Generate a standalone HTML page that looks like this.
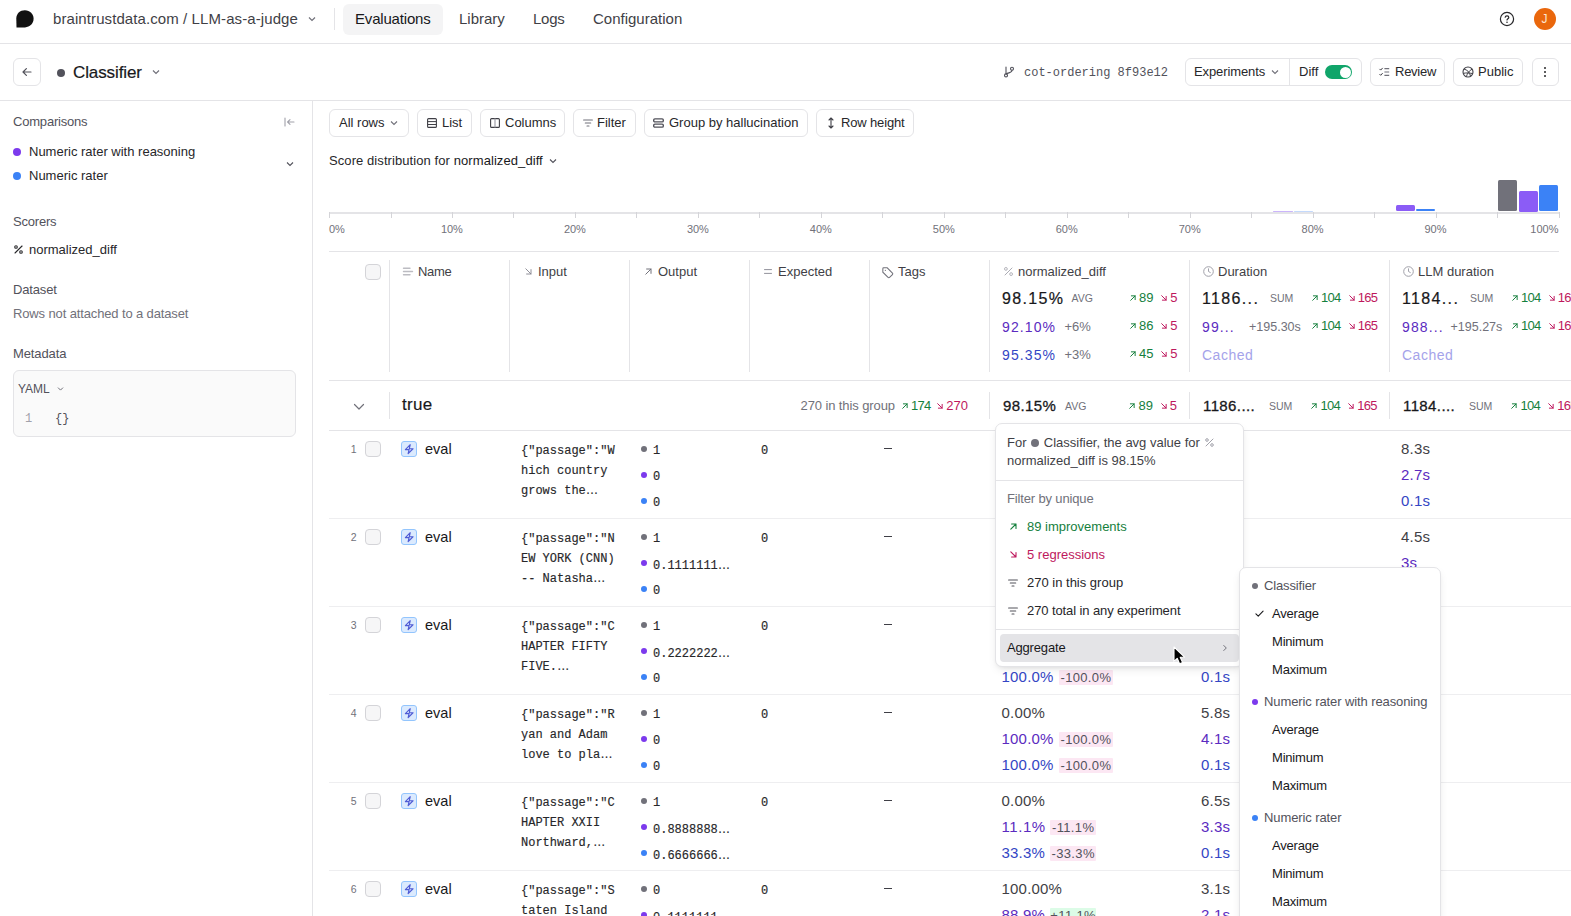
<!DOCTYPE html>
<html><head><meta charset="utf-8"><title>Classifier - Braintrust</title>
<style>
*{box-sizing:border-box;margin:0;padding:0}
html,body{width:1571px;height:916px;overflow:hidden;background:#fff}
body{font-family:"Liberation Sans",sans-serif;color:#18181b;font-size:13px;position:relative}
.a{position:absolute;white-space:nowrap;line-height:1}
.mono{font-family:"Liberation Mono",monospace}
.btn{position:absolute;border:1px solid #e4e4e7;border-radius:6px;background:#fff;height:28px;top:58px}
.hl{position:absolute;background:#e4e4e7;height:1px}
.vl{position:absolute;background:#e4e4e7;width:1px}
.g{color:#71717a}
.dot{position:absolute;border-radius:50%}
.cb{position:absolute;width:14px;height:14px;border:1px solid #d4d4d8;border-radius:4px;background:#f6f6f7}
svg{position:absolute;overflow:visible}

.cl{font-size:11px;color:#71717a}
.h{font-size:13px;color:#3f3f46}
.n{font-size:13px}
.big{font-size:16px;color:#18181b;-webkit-text-stroke:0.22px #18181b;letter-spacing:1.35px}
.agg{font-size:10.5px;color:#71717a}
.med{font-size:14px;letter-spacing:1.1px}
.dl{font-size:13px;color:#71717a}
.gb{font-size:15px;color:#18181b;-webkit-text-stroke:0.3px #18181b;letter-spacing:0.4px}
.ev{font-size:14.5px;color:#18181b}
.m12{font-size:12px;color:#27272a}
.sv{font-size:15px;letter-spacing:0.2px}
.bd{font-size:13px;color:#52525b;height:15px;line-height:15.5px;letter-spacing:0.35px;text-indent:0.3px;text-align:center;border-radius:1px}
.pop{position:absolute;background:#fff;border:1px solid #e4e4e7;border-radius:7px;box-shadow:0 4px 10px -2px rgba(0,0,0,.10),0 2px 4px -2px rgba(0,0,0,.08)}
.mi{font-size:13px;color:#18181b;letter-spacing:-0.2px}
.m12{-webkit-text-stroke:0.15px #27272a}
.el{font-family:"Liberation Sans",sans-serif;font-size:12.5px}
.n3{letter-spacing:-0.7px}
</style></head><body>
<!-- TOPNAV -->
<div id="topnav">
<svg style="left:16px;top:10px" width="18" height="18" viewBox="0 0 18 18"><path d="M0.5 17.5 L0.3 8.6 C0.3 3.6 4 0.2 8.9 0.2 C13.9 0.2 17.6 4 17.6 8.8 C17.6 13.6 13.8 17.2 9 17.4 Z" fill="#111"/></svg>
<div class="a" style="left:53px;top:11px;font-size:15px;color:#3f3f46;letter-spacing:0.09px" id="t_bc">braintrustdata.com / LLM-as-a-judge</div>
<svg style="left:307px;top:15px" width="10" height="8" viewBox="0 0 10 8"><path d="M2 2.5 L5 5.5 L8 2.5" fill="none" stroke="#71717a" stroke-width="1.2"/></svg>
<div class="vl" style="left:334px;top:8px;height:22px"></div>
<div class="a" style="left:342.5px;top:3.5px;width:100px;height:31.5px;border-radius:6px;background:#f4f4f5"></div>
<div class="a" style="left:355px;top:11px;font-size:15px;color:#18181b;letter-spacing:-0.18px" id="t_ev">Evaluations</div>
<div class="a" style="left:459px;top:11px;font-size:15px;color:#3f3f46" id="t_lib">Library</div>
<div class="a" style="left:533px;top:11px;font-size:15px;color:#3f3f46;letter-spacing:-0.25px" id="t_logs">Logs</div>
<div class="a" style="left:593px;top:11px;font-size:15px;color:#3f3f46" id="t_conf">Configuration</div>
<svg style="left:1499px;top:11px" width="16" height="16" viewBox="0 0 16 16"><circle cx="8" cy="8" r="6.6" fill="none" stroke="#27272a" stroke-width="1.2"/><path d="M6.2 6.2 C6.4 4.4 9.8 4.4 9.8 6.4 C9.8 7.6 8 7.8 8 9" fill="none" stroke="#27272a" stroke-width="1.2" stroke-linecap="round"/><circle cx="8" cy="11.2" r="0.8" fill="#27272a"/></svg>
<div class="dot" style="left:1534px;top:8px;width:22px;height:22px;background:#ea670c"></div>
<div class="a" style="left:1541.5px;top:13px;font-size:12px;color:#fde4cf" id="t_j">J</div>
<div class="hl" style="left:0;top:43px;width:1571px"></div>
</div>
<!-- SUBBAR -->
<div id="subbar">
<div class="btn" style="left:13px;width:28px;top:58px;height:28px"></div>
<svg style="left:21px;top:66px" width="12" height="12" viewBox="0 0 12 12"><path d="M10 6 H2.2 M5.4 2.6 L2 6 L5.4 9.4" fill="none" stroke="#52525b" stroke-width="1.2" stroke-linecap="round" stroke-linejoin="round"/></svg>
<div class="dot" style="left:57px;top:69px;width:8px;height:8px;background:#52525b"></div>
<div class="a" style="left:73px;top:63.5px;font-size:17px;color:#18181b;-webkit-text-stroke:0.2px #18181b;letter-spacing:-0.1px" id="t_cls">Classifier</div>
<svg style="left:151px;top:68px" width="10" height="8" viewBox="0 0 10 8"><path d="M2 2.5 L5 5.5 L8 2.5" fill="none" stroke="#71717a" stroke-width="1.2"/></svg>
<div class="hl" style="left:0;top:100px;width:1571px"></div>
</div>

<!-- SUBBAR RIGHT -->
<div id="subright">
<svg style="left:1003px;top:66px" width="12" height="12" viewBox="0 0 12 12"><circle cx="3" cy="9.4" r="1.5" fill="none" stroke="#52525b" stroke-width="1.1"/><circle cx="9" cy="2.8" r="1.5" fill="none" stroke="#52525b" stroke-width="1.1"/><path d="M3 1 V8 M9 4.3 C9 7 5 6.5 3.4 8" fill="none" stroke="#52525b" stroke-width="1.1" stroke-linecap="round"/></svg>
<div class="a mono" style="left:1024px;top:66.5px;font-size:12px;color:#52525b" id="t_cot">cot-ordering 8f93e12</div>
<div class="btn" style="left:1185px;width:177px"></div>
<div class="vl" style="left:1289px;top:59px;height:26px"></div>
<div class="a" style="left:1194px;top:65px;font-size:13px;color:#27272a;letter-spacing:-0.1px" id="t_exp">Experiments</div>
<svg style="left:1270px;top:68px" width="10" height="8" viewBox="0 0 10 8"><path d="M2 2.5 L5 5.5 L8 2.5" fill="none" stroke="#71717a" stroke-width="1.1"/></svg>
<div class="a" style="left:1299px;top:65px;font-size:13px;color:#27272a" id="t_diff">Diff</div>
<div class="a" style="left:1325px;top:65px;width:27px;height:14px;border-radius:7px;background:#10a56a"></div>
<div class="dot" style="left:1339.5px;top:66.5px;width:11px;height:11px;background:#fff"></div>
<div class="btn" style="left:1370px;width:75px"></div>
<svg style="left:1379px;top:67px" width="11" height="10" viewBox="0 0 11 10"><path d="M0.8 2.2 L1.7 3.1 L3.4 1.2 M0.8 7.4 L1.7 8.3 L3.4 6.4" fill="none" stroke="#3f3f46" stroke-width="1" stroke-linecap="round" stroke-linejoin="round"/><path d="M5.4 1.6 H10.2 M5.4 5 H10.2 M5.4 8.4 H10.2" fill="none" stroke="#71717a" stroke-width="1.2"/></svg>
<div class="a" style="left:1395px;top:65px;font-size:13px;color:#27272a;letter-spacing:-0.25px" id="t_rev">Review</div>
<div class="btn" style="left:1453px;width:70px"></div>
<svg style="left:1462px;top:66px" width="12" height="12" viewBox="0 0 12 12"><circle cx="6" cy="6" r="5" fill="none" stroke="#3f3f46" stroke-width="1.1"/><path d="M2 3 C5 4 8 6 8.5 10.3 M4.4 10.6 C5 8 7.5 4 10.2 3.2 M1.2 7.4 C4 6.6 8 7 10.8 7.6" fill="none" stroke="#3f3f46" stroke-width="1"/></svg>
<div class="a" style="left:1478px;top:65px;font-size:13px;color:#27272a" id="t_pub">Public</div>
<div class="btn" style="left:1531.5px;width:27.5px"></div>
<div class="dot" style="left:1544px;top:66.5px;width:2.4px;height:2.4px;background:#27272a"></div>
<div class="dot" style="left:1544px;top:70.8px;width:2.4px;height:2.4px;background:#27272a"></div>
<div class="dot" style="left:1544px;top:75.1px;width:2.4px;height:2.4px;background:#27272a"></div>
</div>
<!-- SIDEBAR -->
<div id="sidebar">
<div class="vl" style="left:312px;top:101px;height:815px"></div>
<div class="a" style="left:13px;top:115px;font-size:13px;color:#52525b;letter-spacing:-0.2px" id="t_comp">Comparisons</div>
<svg style="left:284px;top:117px" width="11" height="10" viewBox="0 0 11 10"><path d="M1 1 V9 M10 5 H3.6 M6 2.6 L3.6 5 L6 7.4" fill="none" stroke="#a1a1aa" stroke-width="1.1" stroke-linecap="round" stroke-linejoin="round"/></svg>
<div class="dot" style="left:13px;top:148px;width:8px;height:8px;background:#7c3aed"></div>
<div class="a" style="left:29px;top:145px;font-size:13px;color:#27272a" id="t_nrr">Numeric rater with reasoning</div>
<div class="dot" style="left:13px;top:172px;width:8px;height:8px;background:#3b82f6"></div>
<div class="a" style="left:29px;top:169px;font-size:13px;color:#27272a" id="t_nr">Numeric rater</div>
<svg style="left:285px;top:160px" width="10" height="8" viewBox="0 0 10 8"><path d="M2 2.5 L5 5.5 L8 2.5" fill="none" stroke="#52525b" stroke-width="1.1"/></svg>
<div class="a" style="left:13px;top:215px;font-size:13px;color:#52525b;letter-spacing:-0.2px" id="t_sc">Scorers</div>
<svg style="left:14px;top:245px" width="9" height="9" viewBox="0 0 9 9"><path d="M8 1 L1 8" stroke="#27272a" stroke-width="1.1" stroke-linecap="round"/><circle cx="2" cy="2" r="1.3" fill="none" stroke="#27272a" stroke-width="1.1"/><circle cx="7" cy="7" r="1.3" fill="none" stroke="#27272a" stroke-width="1.1"/></svg>
<div class="a" style="left:29px;top:243px;font-size:13px;color:#27272a" id="t_nd">normalized_diff</div>
<div class="a" style="left:13px;top:283px;font-size:13px;color:#52525b;letter-spacing:-0.15px" id="t_ds">Dataset</div>
<div class="a" style="left:13px;top:307px;font-size:13px;color:#71717a;letter-spacing:-0.13px" id="t_rows">Rows not attached to a dataset</div>
<div class="a" style="left:13px;top:347px;font-size:13px;color:#52525b;letter-spacing:-0.12px" id="t_md">Metadata</div>
<div class="a" style="left:13px;top:370px;width:283px;height:67px;border:1px solid #e4e4e7;border-radius:6px;background:#fafafa"></div>
<div class="a" style="left:18px;top:383px;font-size:12px;color:#52525b" id="t_yaml">YAML</div>
<svg style="left:56px;top:385px" width="9" height="8" viewBox="0 0 9 8"><path d="M2 2.6 L4.5 5.1 L7 2.6" fill="none" stroke="#71717a" stroke-width="1"/></svg>
<div class="a mono" style="left:25px;top:413px;font-size:12px;color:#a1a1aa">1</div>
<div class="a mono" style="left:55px;top:413px;font-size:12px;color:#52525b">{}</div>
</div>
<!-- TOOLBAR -->
<div id="toolbar">
<div class="btn" style="top:109px;left:329px;width:80px"></div>
<div class="a" style="left:339px;top:116px;font-size:13px;color:#27272a" id="t_all">All rows</div>
<svg style="left:389px;top:119px" width="10" height="8" viewBox="0 0 10 8"><path d="M2 2.5 L5 5.5 L8 2.5" fill="none" stroke="#71717a" stroke-width="1.1"/></svg>
<div class="btn" style="top:109px;left:417px;width:55px"></div>
<svg style="left:427px;top:118px" width="10" height="10" viewBox="0 0 10 10"><rect x="0.6" y="0.6" width="8.8" height="8.8" rx="1" fill="none" stroke="#3f3f46" stroke-width="1.1"/><path d="M0.6 3.6 H9.4 M0.6 6.5 H9.4" stroke="#3f3f46" stroke-width="1"/></svg>
<div class="a" style="left:442px;top:116px;font-size:13px;color:#27272a" id="t_list">List</div>
<div class="btn" style="top:109px;left:480px;width:85px"></div>
<svg style="left:490px;top:118px" width="10" height="10" viewBox="0 0 10 10"><rect x="0.6" y="0.6" width="8.8" height="8.8" rx="1" fill="none" stroke="#3f3f46" stroke-width="1.1"/><path d="M5 0.6 V9.4" stroke="#a1a1aa" stroke-width="1.2"/></svg>
<div class="a" style="left:505px;top:116px;font-size:13px;color:#27272a" id="t_cols">Columns</div>
<div class="btn" style="top:109px;left:573px;width:63px"></div>
<svg style="left:583px;top:119px" width="10" height="8" viewBox="0 0 10 8"><path d="M0.6 1 H9.4 M2.3 4 H7.7 M4 7 H6" stroke="#71717a" stroke-width="1.1" stroke-linecap="round"/></svg>
<div class="a" style="left:597px;top:116px;font-size:13px;color:#27272a" id="t_filt">Filter</div>
<div class="btn" style="top:109px;left:644px;width:164px"></div>
<svg style="left:653px;top:118px" width="11" height="10" viewBox="0 0 11 10"><rect x="0.7" y="0.9" width="9.6" height="3" rx="1.2" fill="none" stroke="#52525b" stroke-width="1.4"/><rect x="0.7" y="6.1" width="9.6" height="3" rx="1.2" fill="none" stroke="#52525b" stroke-width="1.4"/></svg>
<div class="a" style="left:669px;top:116px;font-size:13px;color:#27272a" id="t_grp">Group by hallucination</div>
<div class="btn" style="top:109px;left:816px;width:98px"></div>
<svg style="left:828px;top:117px" width="6" height="12" viewBox="0 0 6 12"><path d="M3 1 V11 M1 3 L3 1 L5 3 M1 9 L3 11 L5 9" fill="none" stroke="#3f3f46" stroke-width="1.1" stroke-linecap="round" stroke-linejoin="round"/></svg>
<div class="a" style="left:841px;top:116px;font-size:13px;color:#27272a;letter-spacing:-0.15px" id="t_rh">Row height</div>
<div class="a" style="left:329px;top:154px;font-size:13px;color:#27272a;letter-spacing:0.08px" id="t_sd">Score distribution for <span style="color:#18181b">normalized_diff</span></div>
<svg style="left:548px;top:157px" width="10" height="8" viewBox="0 0 10 8"><path d="M2 2.5 L5 5.5 L8 2.5" fill="none" stroke="#52525b" stroke-width="1.1"/></svg>
</div>

<!-- CHART -->
<div id="chart">
<div class="a" style="left:329.0px;top:211.5px;width:1230.5px;height:2px;background:#e4e4e7"></div>
<div class="a" style="left:329.0px;top:212px;width:1px;height:6px;background:#d4d4d8"></div>
<div class="a" style="left:390.5px;top:212px;width:1px;height:6px;background:#d4d4d8"></div>
<div class="a" style="left:451.9px;top:212px;width:1px;height:6px;background:#d4d4d8"></div>
<div class="a" style="left:513.4px;top:212px;width:1px;height:6px;background:#d4d4d8"></div>
<div class="a" style="left:574.9px;top:212px;width:1px;height:6px;background:#d4d4d8"></div>
<div class="a" style="left:636.4px;top:212px;width:1px;height:6px;background:#d4d4d8"></div>
<div class="a" style="left:697.9px;top:212px;width:1px;height:6px;background:#d4d4d8"></div>
<div class="a" style="left:759.3px;top:212px;width:1px;height:6px;background:#d4d4d8"></div>
<div class="a" style="left:820.8px;top:212px;width:1px;height:6px;background:#d4d4d8"></div>
<div class="a" style="left:882.3px;top:212px;width:1px;height:6px;background:#d4d4d8"></div>
<div class="a" style="left:943.8px;top:212px;width:1px;height:6px;background:#d4d4d8"></div>
<div class="a" style="left:1005.2px;top:212px;width:1px;height:6px;background:#d4d4d8"></div>
<div class="a" style="left:1066.7px;top:212px;width:1px;height:6px;background:#d4d4d8"></div>
<div class="a" style="left:1128.2px;top:212px;width:1px;height:6px;background:#d4d4d8"></div>
<div class="a" style="left:1189.7px;top:212px;width:1px;height:6px;background:#d4d4d8"></div>
<div class="a" style="left:1251.1px;top:212px;width:1px;height:6px;background:#d4d4d8"></div>
<div class="a" style="left:1312.6px;top:212px;width:1px;height:6px;background:#d4d4d8"></div>
<div class="a" style="left:1374.1px;top:212px;width:1px;height:6px;background:#d4d4d8"></div>
<div class="a" style="left:1435.5px;top:212px;width:1px;height:6px;background:#d4d4d8"></div>
<div class="a" style="left:1497.0px;top:212px;width:1px;height:6px;background:#d4d4d8"></div>
<div class="a" style="left:1558.5px;top:212px;width:1px;height:6px;background:#d4d4d8"></div>
<div class="a cl" style="left:329.0px;top:224px">0%</div>
<div class="a cl" style="left:431.9px;top:224px;width:40px;text-align:center">10%</div>
<div class="a cl" style="left:554.9px;top:224px;width:40px;text-align:center">20%</div>
<div class="a cl" style="left:677.9px;top:224px;width:40px;text-align:center">30%</div>
<div class="a cl" style="left:800.8px;top:224px;width:40px;text-align:center">40%</div>
<div class="a cl" style="left:923.8px;top:224px;width:40px;text-align:center">50%</div>
<div class="a cl" style="left:1046.7px;top:224px;width:40px;text-align:center">60%</div>
<div class="a cl" style="left:1169.7px;top:224px;width:40px;text-align:center">70%</div>
<div class="a cl" style="left:1292.6px;top:224px;width:40px;text-align:center">80%</div>
<div class="a cl" style="left:1415.5px;top:224px;width:40px;text-align:center">90%</div>
<div class="a cl" style="left:1518.5px;top:224px;width:40px;text-align:right">100%</div>
<div class="a" style="left:1498.3px;top:180.3px;width:19px;height:31.19999999999999px;background:#71717a;border-radius:1.5px;opacity:1"></div>
<div class="a" style="left:1518.9px;top:190.5px;width:19px;height:21.0px;background:#8b5cf6;border-radius:1.5px;opacity:1"></div>
<div class="a" style="left:1539.2px;top:185.3px;width:19.3px;height:26.19999999999999px;background:#3b82f6;border-radius:1.5px;opacity:1"></div>
<div class="a" style="left:1395.5px;top:205.2px;width:19.4px;height:6.300000000000011px;background:#8b5cf6;border-radius:1.5px;opacity:1"></div>
<div class="a" style="left:1416.2px;top:208.9px;width:19px;height:2.5999999999999943px;background:#3b82f6;border-radius:1.5px;opacity:1"></div>
<div class="a" style="left:1273px;top:210.7px;width:20px;height:0.8000000000000114px;background:#8b5cf6;border-radius:1.5px;opacity:0.45"></div>
<div class="a" style="left:1293.5px;top:211px;width:19px;height:0.5px;background:#3b82f6;border-radius:1.5px;opacity:0.3"></div>
</div>
<!-- TABLE HEADER -->
<div id="thead">
<div class="hl" style="left:329px;top:251px;width:1230px"></div>
<div class="hl" style="left:329px;top:380px;width:1242px"></div>
<div class="hl" style="left:329px;top:430px;width:1242px"></div>
<div class="vl" style="left:389px;top:260px;height:112px"></div>
<div class="vl" style="left:509px;top:260px;height:112px"></div>
<div class="vl" style="left:629px;top:260px;height:112px"></div>
<div class="vl" style="left:749px;top:260px;height:112px"></div>
<div class="vl" style="left:869px;top:260px;height:112px"></div>
<div class="vl" style="left:989px;top:260px;height:112px"></div>
<div class="vl" style="left:1189px;top:260px;height:112px"></div>
<div class="vl" style="left:1389px;top:260px;height:112px"></div>
<div class="vl" style="left:389px;top:392px;height:27px"></div>
<div class="vl" style="left:989px;top:392px;height:27px"></div>
<div class="vl" style="left:1189px;top:392px;height:27px"></div>
<div class="vl" style="left:1389px;top:392px;height:27px"></div>
<div class="cb" style="left:365px;top:264px;width:16px;height:16px"></div>
<svg style="left:403px;top:267px" width="10" height="9" viewBox="0 0 10 9"><path d="M0.5 1.2 H7 M0.5 4.5 H9.5 M0.5 7.8 H7" stroke="#bcbcc2" stroke-width="1.4" stroke-linecap="round"/></svg>
<svg style="left:525px;top:268px" width="7" height="7" viewBox="0 0 7 7"><path d="M0.8 0.8 L6 6 M6 1.6 V6 H1.6" fill="none" stroke="#85858e" stroke-width="0.9" stroke-linecap="round" stroke-linejoin="round"/></svg>
<svg style="left:645px;top:268px" width="7" height="7" viewBox="0 0 7 7"><path d="M0.8 6.2 L6 1 M1.6 1 H6 V5.4" fill="none" stroke="#71717a" stroke-width="1" stroke-linecap="round" stroke-linejoin="round"/></svg>
<svg style="left:764px;top:268px" width="8" height="7" viewBox="0 0 8 7"><path d="M0.5 1.6 H7.5 M0.5 5.4 H7.5" stroke="#85858e" stroke-width="0.9" stroke-linecap="round"/></svg>
<svg style="left:882px;top:266.7px" width="11.5" height="11.5" viewBox="0 0 11 11"><path d="M0.8 1.6 V5 L5.8 10 C6.2 10.4 6.8 10.4 7.2 10 L10 7.2 C10.4 6.8 10.4 6.2 10 5.8 L5 0.8 H1.6 C1.1 0.8 0.8 1.1 0.8 1.6Z" fill="none" stroke="#71717a" stroke-width="1"/><circle cx="3.2" cy="3.2" r="0.6" fill="#71717a"/></svg>
<div class="a h" style="left:418px;top:265px;letter-spacing:-0.3px" id="h_name">Name</div>
<div class="a h" style="left:538px;top:265px" id="h_in">Input</div>
<div class="a h" style="left:658px;top:265px" id="h_out">Output</div>
<div class="a h" style="left:778px;top:265px" id="h_exp">Expected</div>
<div class="a h" style="left:898px;top:265px" id="h_tags">Tags</div>
<svg style="left:1003.5px;top:267px" width="9" height="9" viewBox="0 0 9 9"><path d="M8 1 L1 8" stroke="#a1a1aa" stroke-width="0.9" stroke-linecap="round"/><circle cx="1.9" cy="1.9" r="1.4" fill="none" stroke="#a1a1aa" stroke-width="0.8"/><circle cx="7.1" cy="7.1" r="1.4" fill="none" stroke="#a1a1aa" stroke-width="0.8"/></svg>
<div class="a h" style="left:1018px;top:265px" id="h_nd">normalized_diff</div>
<svg style="left:1202.5px;top:266px" width="11" height="11" viewBox="0 0 11 11"><circle cx="5.5" cy="5.5" r="4.8" fill="none" stroke="#a1a1aa" stroke-width="1"/><path d="M5.5 2.8 V5.5 L7.3 6.5" fill="none" stroke="#a1a1aa" stroke-width="1" stroke-linecap="round"/></svg>
<div class="a h" style="left:1218px;top:265px" id="h_dur">Duration</div>
<svg style="left:1402.5px;top:266px" width="11" height="11" viewBox="0 0 11 11"><circle cx="5.5" cy="5.5" r="4.8" fill="none" stroke="#a1a1aa" stroke-width="1"/><path d="M5.5 2.8 V5.5 L7.3 6.5" fill="none" stroke="#a1a1aa" stroke-width="1" stroke-linecap="round"/></svg>
<div class="a h" style="left:1418px;top:265px" id="h_llm">LLM duration</div>
<div class="a big" style="left:1002px;top:291px" id="b1">98.15%</div>
<div class="a agg" style="left:1071.5px;top:293px" id="ag1">AVG</div>
<svg style="left:1129.5px;top:294.8px" width="6" height="6" viewBox="0 0 7 7"><path d="M0.8 6.2 L6 1 M1.6 1 H6 V5.4" fill="none" stroke="#15803d" stroke-width="1.15" stroke-linecap="round" stroke-linejoin="round"/></svg>
<div class="a n" style="left:1139.0px;top:290.7px;color:#15803d" id="a1u">89</div>
<svg style="left:1161px;top:294.8px" width="6" height="6" viewBox="0 0 7 7"><path d="M0.8 0.8 L6 6 M6 1.6 V6 H1.6" fill="none" stroke="#be185d" stroke-width="1.15" stroke-linecap="round" stroke-linejoin="round"/></svg>
<div class="a n" style="left:1170.3px;top:290.7px;color:#be185d" id="a1d">5</div>
<div class="a med" style="left:1002px;top:320px;color:#5b2bc0" id="m1">92.10%</div>
<div class="a dl" style="left:1064.5px;top:320px" id="d1">+6%</div>
<svg style="left:1129.5px;top:323.3px" width="6" height="6" viewBox="0 0 7 7"><path d="M0.8 6.2 L6 1 M1.6 1 H6 V5.4" fill="none" stroke="#15803d" stroke-width="1.15" stroke-linecap="round" stroke-linejoin="round"/></svg>
<div class="a n" style="left:1139.0px;top:319.2px;color:#15803d" id="a2u">86</div>
<svg style="left:1161px;top:323.3px" width="6" height="6" viewBox="0 0 7 7"><path d="M0.8 0.8 L6 6 M6 1.6 V6 H1.6" fill="none" stroke="#be185d" stroke-width="1.15" stroke-linecap="round" stroke-linejoin="round"/></svg>
<div class="a n" style="left:1170.3px;top:319.2px;color:#be185d" id="a2d">5</div>
<div class="a med" style="left:1002px;top:348.3px;color:#3346c4" id="m2">95.35%</div>
<div class="a dl" style="left:1064.5px;top:348px" id="d2">+3%</div>
<svg style="left:1129.5px;top:351.3px" width="6" height="6" viewBox="0 0 7 7"><path d="M0.8 6.2 L6 1 M1.6 1 H6 V5.4" fill="none" stroke="#15803d" stroke-width="1.15" stroke-linecap="round" stroke-linejoin="round"/></svg>
<div class="a n" style="left:1139.0px;top:347.2px;color:#15803d" id="a3u">45</div>
<svg style="left:1161px;top:351.3px" width="6" height="6" viewBox="0 0 7 7"><path d="M0.8 0.8 L6 6 M6 1.6 V6 H1.6" fill="none" stroke="#be185d" stroke-width="1.15" stroke-linecap="round" stroke-linejoin="round"/></svg>
<div class="a n" style="left:1170.3px;top:347.2px;color:#be185d" id="a3d">5</div>
<div class="a big" style="left:1202px;top:291px" id="b2">1186...</div>
<div class="a agg" style="left:1270px;top:293px" id="ag2">SUM</div>
<svg style="left:1311.5px;top:294.8px" width="6" height="6" viewBox="0 0 7 7"><path d="M0.8 6.2 L6 1 M1.6 1 H6 V5.4" fill="none" stroke="#15803d" stroke-width="1.15" stroke-linecap="round" stroke-linejoin="round"/></svg>
<div class="a n n3" style="left:1321.0px;top:290.7px;color:#15803d" id="a4u">104</div>
<svg style="left:1348.5px;top:294.8px" width="6" height="6" viewBox="0 0 7 7"><path d="M0.8 0.8 L6 6 M6 1.6 V6 H1.6" fill="none" stroke="#be185d" stroke-width="1.15" stroke-linecap="round" stroke-linejoin="round"/></svg>
<div class="a n n3" style="left:1357.8px;top:290.7px;color:#be185d" id="a4d">165</div>
<div class="a med" style="left:1202px;top:320px;color:#5b2bc0" id="m3">99...</div>
<div class="a dl" style="left:1249px;top:320.5px;font-size:12.5px" id="d3">+195.30s</div>
<svg style="left:1311.5px;top:323.3px" width="6" height="6" viewBox="0 0 7 7"><path d="M0.8 6.2 L6 1 M1.6 1 H6 V5.4" fill="none" stroke="#15803d" stroke-width="1.15" stroke-linecap="round" stroke-linejoin="round"/></svg>
<div class="a n n3" style="left:1321.0px;top:319.2px;color:#15803d" id="a5u">104</div>
<svg style="left:1348.5px;top:323.3px" width="6" height="6" viewBox="0 0 7 7"><path d="M0.8 0.8 L6 6 M6 1.6 V6 H1.6" fill="none" stroke="#be185d" stroke-width="1.15" stroke-linecap="round" stroke-linejoin="round"/></svg>
<div class="a n n3" style="left:1357.8px;top:319.2px;color:#be185d" id="a5d">165</div>
<div class="a med" style="left:1202px;top:348.3px;color:#a5a3ea;letter-spacing:0.5px" id="m4">Cached</div>
<div class="a big" style="left:1402px;top:291px" id="b3">1184...</div>
<div class="a agg" style="left:1470px;top:293px" id="ag3">SUM</div>
<svg style="left:1511.5px;top:294.8px" width="6" height="6" viewBox="0 0 7 7"><path d="M0.8 6.2 L6 1 M1.6 1 H6 V5.4" fill="none" stroke="#15803d" stroke-width="1.15" stroke-linecap="round" stroke-linejoin="round"/></svg>
<div class="a n n3" style="left:1521.0px;top:290.7px;color:#15803d" id="a6u">104</div>
<svg style="left:1548.5px;top:294.8px" width="6" height="6" viewBox="0 0 7 7"><path d="M0.8 0.8 L6 6 M6 1.6 V6 H1.6" fill="none" stroke="#be185d" stroke-width="1.15" stroke-linecap="round" stroke-linejoin="round"/></svg>
<div class="a n n3" style="left:1557.8px;top:290.7px;color:#be185d" id="a6d">165</div>
<div class="a med" style="left:1402px;top:320px;color:#5b2bc0" id="m5">988...</div>
<div class="a dl" style="left:1450.5px;top:320.5px;font-size:12.5px" id="d4">+195.27s</div>
<svg style="left:1511.5px;top:323.3px" width="6" height="6" viewBox="0 0 7 7"><path d="M0.8 6.2 L6 1 M1.6 1 H6 V5.4" fill="none" stroke="#15803d" stroke-width="1.15" stroke-linecap="round" stroke-linejoin="round"/></svg>
<div class="a n n3" style="left:1521.0px;top:319.2px;color:#15803d" id="a7u">104</div>
<svg style="left:1548.5px;top:323.3px" width="6" height="6" viewBox="0 0 7 7"><path d="M0.8 0.8 L6 6 M6 1.6 V6 H1.6" fill="none" stroke="#be185d" stroke-width="1.15" stroke-linecap="round" stroke-linejoin="round"/></svg>
<div class="a n n3" style="left:1557.8px;top:319.2px;color:#be185d" id="a7d">165</div>
<div class="a med" style="left:1402px;top:348.3px;color:#a5a3ea;letter-spacing:0.5px" id="m6">Cached</div>
</div>
<!-- GROUP ROW -->
<div id="grp">
<svg style="left:353px;top:402px" width="12" height="9" viewBox="0 0 12 9"><path d="M1.5 2.5 L6 7 L10.5 2.5" fill="none" stroke="#71717a" stroke-width="1.2" stroke-linecap="round" stroke-linejoin="round"/></svg>
<div class="a" style="left:402px;top:396px;font-size:17px;color:#18181b;-webkit-text-stroke:0.15px #18181b;letter-spacing:0.3px" id="g_true">true</div>
<div class="a" style="left:800.5px;top:398.5px;font-size:13px;color:#71717a;letter-spacing:-0.1px" id="g_cnt">270 in this group</div>
<svg style="left:901.5px;top:402.8px" width="6" height="6" viewBox="0 0 7 7"><path d="M0.8 6.2 L6 1 M1.6 1 H6 V5.4" fill="none" stroke="#15803d" stroke-width="1.15" stroke-linecap="round" stroke-linejoin="round"/></svg>
<div class="a n n3" style="left:911.0px;top:398.7px;color:#15803d" id="agu">174</div>
<svg style="left:937px;top:402.8px" width="6" height="6" viewBox="0 0 7 7"><path d="M0.8 0.8 L6 6 M6 1.6 V6 H1.6" fill="none" stroke="#be185d" stroke-width="1.15" stroke-linecap="round" stroke-linejoin="round"/></svg>
<div class="a n" style="left:946.3px;top:398.7px;color:#be185d" id="agd">270</div>
<div class="a gb" style="left:1003px;top:398px" id="gb1">98.15%</div>
<div class="a agg" style="left:1065px;top:401px" id="gag1">AVG</div>
<svg style="left:1129px;top:402.8px" width="6" height="6" viewBox="0 0 7 7"><path d="M0.8 6.2 L6 1 M1.6 1 H6 V5.4" fill="none" stroke="#15803d" stroke-width="1.15" stroke-linecap="round" stroke-linejoin="round"/></svg>
<div class="a n" style="left:1138.5px;top:398.7px;color:#15803d" id="g1u">89</div>
<svg style="left:1160.5px;top:402.8px" width="6" height="6" viewBox="0 0 7 7"><path d="M0.8 0.8 L6 6 M6 1.6 V6 H1.6" fill="none" stroke="#be185d" stroke-width="1.15" stroke-linecap="round" stroke-linejoin="round"/></svg>
<div class="a n" style="left:1169.8px;top:398.7px;color:#be185d" id="g1d">5</div>
<div class="a gb" style="left:1203px;top:398px" id="gb2">1186....</div>
<div class="a agg" style="left:1269px;top:401px" id="gag2">SUM</div>
<svg style="left:1311px;top:402.8px" width="6" height="6" viewBox="0 0 7 7"><path d="M0.8 6.2 L6 1 M1.6 1 H6 V5.4" fill="none" stroke="#15803d" stroke-width="1.15" stroke-linecap="round" stroke-linejoin="round"/></svg>
<div class="a n n3" style="left:1320.5px;top:398.7px;color:#15803d" id="g2u">104</div>
<svg style="left:1348px;top:402.8px" width="6" height="6" viewBox="0 0 7 7"><path d="M0.8 0.8 L6 6 M6 1.6 V6 H1.6" fill="none" stroke="#be185d" stroke-width="1.15" stroke-linecap="round" stroke-linejoin="round"/></svg>
<div class="a n n3" style="left:1357.3px;top:398.7px;color:#be185d" id="g2d">165</div>
<div class="a gb" style="left:1403px;top:398px" id="gb3">1184....</div>
<div class="a agg" style="left:1469px;top:401px" id="gag3">SUM</div>
<svg style="left:1511px;top:402.8px" width="6" height="6" viewBox="0 0 7 7"><path d="M0.8 6.2 L6 1 M1.6 1 H6 V5.4" fill="none" stroke="#15803d" stroke-width="1.15" stroke-linecap="round" stroke-linejoin="round"/></svg>
<div class="a n n3" style="left:1520.5px;top:398.7px;color:#15803d" id="g3u">104</div>
<svg style="left:1548px;top:402.8px" width="6" height="6" viewBox="0 0 7 7"><path d="M0.8 0.8 L6 6 M6 1.6 V6 H1.6" fill="none" stroke="#be185d" stroke-width="1.15" stroke-linecap="round" stroke-linejoin="round"/></svg>
<div class="a n n3" style="left:1557.3px;top:398.7px;color:#be185d" id="g3d">165</div>
</div>
<!-- ROWS -->
<div id="rows">
<div class="a" style="left:350.7px;top:443.5px;font-size:10.5px;color:#71717a">1</div>
<div class="cb" style="left:365px;top:441px;width:16px;height:16px"></div>
<div class="a" style="left:401px;top:441px;width:16px;height:16px;border:1px solid #93c5fd;border-radius:3px;background:#dbeafe"></div>
<svg style="left:404px;top:443.8px" width="10.4" height="10.4" viewBox="0 0 9 9"><path d="M5.4 0.6 L1.2 4.9 H4.4 L3.6 8.4 L7.8 4.1 H4.6 Z" fill="none" stroke="#4f5bd5" stroke-width="1" stroke-linejoin="round"/></svg>
<div class="a ev" style="left:425px;top:442px">eval</div>
<div class="a mono m12" style="left:521px;top:445px">{"passage":"W</div>
<div class="a mono m12" style="left:521px;top:465px">hich country</div>
<div class="a mono m12" style="left:521px;top:484px">grows the<span class="el">…</span></div>
<div class="dot" style="left:641px;top:446px;width:6px;height:6px;background:#71717a"></div>
<div class="a mono m12" style="left:653px;top:445px">1</div>
<div class="dot" style="left:641px;top:472px;width:6px;height:6px;background:#7c3aed"></div>
<div class="a mono m12" style="left:653px;top:471px">0</div>
<div class="dot" style="left:641px;top:498px;width:6px;height:6px;background:#3b82f6"></div>
<div class="a mono m12" style="left:653px;top:497px">0</div>
<div class="a mono m12" style="left:761px;top:445px">0</div>
<div class="a" style="left:884px;top:447.5px;width:8px;height:1px;background:#3f3f46"></div>
<div class="a sv" style="left:1201px;top:441.1px;color:#3f3f46">8.3s</div>
<div class="a sv" style="left:1401px;top:441.1px;color:#3f3f46">8.3s</div>
<div class="a sv" style="left:1201px;top:467.2px;color:#5b2bc0">2.7s</div>
<div class="a sv" style="left:1401px;top:467.2px;color:#5b2bc0">2.7s</div>
<div class="a sv" style="left:1201px;top:493.3px;color:#3346c4">0.1s</div>
<div class="a sv" style="left:1401px;top:493.3px;color:#3346c4">0.1s</div>
<div class="hl" style="left:329px;top:518px;width:1242px;background:#eeeef0"></div>
<div class="a" style="left:350.7px;top:531.5px;font-size:10.5px;color:#71717a">2</div>
<div class="cb" style="left:365px;top:529px;width:16px;height:16px"></div>
<div class="a" style="left:401px;top:529px;width:16px;height:16px;border:1px solid #93c5fd;border-radius:3px;background:#dbeafe"></div>
<svg style="left:404px;top:531.8px" width="10.4" height="10.4" viewBox="0 0 9 9"><path d="M5.4 0.6 L1.2 4.9 H4.4 L3.6 8.4 L7.8 4.1 H4.6 Z" fill="none" stroke="#4f5bd5" stroke-width="1" stroke-linejoin="round"/></svg>
<div class="a ev" style="left:425px;top:530px">eval</div>
<div class="a mono m12" style="left:521px;top:533px">{"passage":"N</div>
<div class="a mono m12" style="left:521px;top:553px">EW YORK (CNN)</div>
<div class="a mono m12" style="left:521px;top:572px">-- Natasha<span class="el">…</span></div>
<div class="dot" style="left:641px;top:534px;width:6px;height:6px;background:#71717a"></div>
<div class="a mono m12" style="left:653px;top:533px">1</div>
<div class="dot" style="left:641px;top:560px;width:6px;height:6px;background:#7c3aed"></div>
<div class="a mono m12" style="left:653px;top:559px">0.1111111<span class="el">…</span></div>
<div class="dot" style="left:641px;top:586px;width:6px;height:6px;background:#3b82f6"></div>
<div class="a mono m12" style="left:653px;top:585px">0</div>
<div class="a mono m12" style="left:761px;top:533px">0</div>
<div class="a" style="left:884px;top:535.5px;width:8px;height:1px;background:#3f3f46"></div>
<div class="a sv" style="left:1201px;top:529.1px;color:#3f3f46">4.5s</div>
<div class="a sv" style="left:1401px;top:529.1px;color:#3f3f46">4.5s</div>
<div class="a sv" style="left:1201px;top:555.2px;color:#5b2bc0">3s</div>
<div class="a sv" style="left:1401px;top:555.2px;color:#5b2bc0">3s</div>
<div class="a sv" style="left:1201px;top:581.3px;color:#3346c4">0.1s</div>
<div class="a sv" style="left:1401px;top:581.3px;color:#3346c4">0.1s</div>
<div class="hl" style="left:329px;top:606px;width:1242px;background:#eeeef0"></div>
<div class="a" style="left:350.7px;top:619.5px;font-size:10.5px;color:#71717a">3</div>
<div class="cb" style="left:365px;top:617px;width:16px;height:16px"></div>
<div class="a" style="left:401px;top:617px;width:16px;height:16px;border:1px solid #93c5fd;border-radius:3px;background:#dbeafe"></div>
<svg style="left:404px;top:619.8px" width="10.4" height="10.4" viewBox="0 0 9 9"><path d="M5.4 0.6 L1.2 4.9 H4.4 L3.6 8.4 L7.8 4.1 H4.6 Z" fill="none" stroke="#4f5bd5" stroke-width="1" stroke-linejoin="round"/></svg>
<div class="a ev" style="left:425px;top:618px">eval</div>
<div class="a mono m12" style="left:521px;top:621px">{"passage":"C</div>
<div class="a mono m12" style="left:521px;top:641px">HAPTER FIFTY</div>
<div class="a mono m12" style="left:521px;top:660px">FIVE.<span class="el">…</span></div>
<div class="dot" style="left:641px;top:622px;width:6px;height:6px;background:#71717a"></div>
<div class="a mono m12" style="left:653px;top:621px">1</div>
<div class="dot" style="left:641px;top:648px;width:6px;height:6px;background:#7c3aed"></div>
<div class="a mono m12" style="left:653px;top:647px">0.2222222<span class="el">…</span></div>
<div class="dot" style="left:641px;top:674px;width:6px;height:6px;background:#3b82f6"></div>
<div class="a mono m12" style="left:653px;top:673px">0</div>
<div class="a mono m12" style="left:761px;top:621px">0</div>
<div class="a" style="left:884px;top:623.5px;width:8px;height:1px;background:#3f3f46"></div>
<div class="a sv" style="left:1001.5px;top:617.1px;color:#3f3f46" id="s30">0.00%</div>
<div class="a sv" style="left:1201px;top:617.1px;color:#3f3f46">5.2s</div>
<div class="a sv" style="left:1001.5px;top:643.2px;color:#5b2bc0" id="s31">100.0%</div>
<div class="a bd" style="left:1058.5px;top:644px;width:54.5px;background:#fce7f3" id="bd31">-100.0%</div>
<div class="a sv" style="left:1201px;top:643.2px;color:#5b2bc0">3.9s</div>
<div class="a sv" style="left:1001.5px;top:669.3px;color:#3346c4" id="s32">100.0%</div>
<div class="a bd" style="left:1058.5px;top:670px;width:54.5px;background:#fce7f3" id="bd32">-100.0%</div>
<div class="a sv" style="left:1201px;top:669.3px;color:#3346c4">0.1s</div>
<div class="hl" style="left:329px;top:694px;width:1242px;background:#eeeef0"></div>
<div class="a" style="left:350.7px;top:707.5px;font-size:10.5px;color:#71717a">4</div>
<div class="cb" style="left:365px;top:705px;width:16px;height:16px"></div>
<div class="a" style="left:401px;top:705px;width:16px;height:16px;border:1px solid #93c5fd;border-radius:3px;background:#dbeafe"></div>
<svg style="left:404px;top:707.8px" width="10.4" height="10.4" viewBox="0 0 9 9"><path d="M5.4 0.6 L1.2 4.9 H4.4 L3.6 8.4 L7.8 4.1 H4.6 Z" fill="none" stroke="#4f5bd5" stroke-width="1" stroke-linejoin="round"/></svg>
<div class="a ev" style="left:425px;top:706px">eval</div>
<div class="a mono m12" style="left:521px;top:709px">{"passage":"R</div>
<div class="a mono m12" style="left:521px;top:729px">yan and Adam</div>
<div class="a mono m12" style="left:521px;top:748px">love to pla<span class="el">…</span></div>
<div class="dot" style="left:641px;top:710px;width:6px;height:6px;background:#71717a"></div>
<div class="a mono m12" style="left:653px;top:709px">1</div>
<div class="dot" style="left:641px;top:736px;width:6px;height:6px;background:#7c3aed"></div>
<div class="a mono m12" style="left:653px;top:735px">0</div>
<div class="dot" style="left:641px;top:762px;width:6px;height:6px;background:#3b82f6"></div>
<div class="a mono m12" style="left:653px;top:761px">0</div>
<div class="a mono m12" style="left:761px;top:709px">0</div>
<div class="a" style="left:884px;top:711.5px;width:8px;height:1px;background:#3f3f46"></div>
<div class="a sv" style="left:1001.5px;top:705.1px;color:#3f3f46" id="s40">0.00%</div>
<div class="a sv" style="left:1201px;top:705.1px;color:#3f3f46">5.8s</div>
<div class="a sv" style="left:1001.5px;top:731.2px;color:#5b2bc0" id="s41">100.0%</div>
<div class="a bd" style="left:1058.5px;top:732px;width:54.5px;background:#fce7f3" id="bd41">-100.0%</div>
<div class="a sv" style="left:1201px;top:731.2px;color:#5b2bc0">4.1s</div>
<div class="a sv" style="left:1001.5px;top:757.3px;color:#3346c4" id="s42">100.0%</div>
<div class="a bd" style="left:1058.5px;top:758px;width:54.5px;background:#fce7f3" id="bd42">-100.0%</div>
<div class="a sv" style="left:1201px;top:757.3px;color:#3346c4">0.1s</div>
<div class="hl" style="left:329px;top:782px;width:1242px;background:#eeeef0"></div>
<div class="a" style="left:350.7px;top:795.5px;font-size:10.5px;color:#71717a">5</div>
<div class="cb" style="left:365px;top:793px;width:16px;height:16px"></div>
<div class="a" style="left:401px;top:793px;width:16px;height:16px;border:1px solid #93c5fd;border-radius:3px;background:#dbeafe"></div>
<svg style="left:404px;top:795.8px" width="10.4" height="10.4" viewBox="0 0 9 9"><path d="M5.4 0.6 L1.2 4.9 H4.4 L3.6 8.4 L7.8 4.1 H4.6 Z" fill="none" stroke="#4f5bd5" stroke-width="1" stroke-linejoin="round"/></svg>
<div class="a ev" style="left:425px;top:794px">eval</div>
<div class="a mono m12" style="left:521px;top:797px">{"passage":"C</div>
<div class="a mono m12" style="left:521px;top:817px">HAPTER XXII</div>
<div class="a mono m12" style="left:521px;top:836px">Northward,<span class="el">…</span></div>
<div class="dot" style="left:641px;top:798px;width:6px;height:6px;background:#71717a"></div>
<div class="a mono m12" style="left:653px;top:797px">1</div>
<div class="dot" style="left:641px;top:824px;width:6px;height:6px;background:#7c3aed"></div>
<div class="a mono m12" style="left:653px;top:823px">0.8888888<span class="el">…</span></div>
<div class="dot" style="left:641px;top:850px;width:6px;height:6px;background:#3b82f6"></div>
<div class="a mono m12" style="left:653px;top:849px">0.6666666<span class="el">…</span></div>
<div class="a mono m12" style="left:761px;top:797px">0</div>
<div class="a" style="left:884px;top:799.5px;width:8px;height:1px;background:#3f3f46"></div>
<div class="a sv" style="left:1001.5px;top:793.1px;color:#3f3f46" id="s50">0.00%</div>
<div class="a sv" style="left:1201px;top:793.1px;color:#3f3f46">6.5s</div>
<div class="a sv" style="left:1001.5px;top:819.2px;color:#5b2bc0;letter-spacing:0.55px" id="s51">11.1%</div>
<div class="a bd" style="left:1050px;top:820px;width:46px;background:#fce7f3" id="bd51">-11.1%</div>
<div class="a sv" style="left:1201px;top:819.2px;color:#5b2bc0">3.3s</div>
<div class="a sv" style="left:1001.5px;top:845.3px;color:#3346c4" id="s52">33.3%</div>
<div class="a bd" style="left:1050px;top:846px;width:46px;background:#fce7f3" id="bd52">-33.3%</div>
<div class="a sv" style="left:1201px;top:845.3px;color:#3346c4">0.1s</div>
<div class="hl" style="left:329px;top:870px;width:1242px;background:#eeeef0"></div>
<div class="a" style="left:350.7px;top:883.5px;font-size:10.5px;color:#71717a">6</div>
<div class="cb" style="left:365px;top:881px;width:16px;height:16px"></div>
<div class="a" style="left:401px;top:881px;width:16px;height:16px;border:1px solid #93c5fd;border-radius:3px;background:#dbeafe"></div>
<svg style="left:404px;top:883.8px" width="10.4" height="10.4" viewBox="0 0 9 9"><path d="M5.4 0.6 L1.2 4.9 H4.4 L3.6 8.4 L7.8 4.1 H4.6 Z" fill="none" stroke="#4f5bd5" stroke-width="1" stroke-linejoin="round"/></svg>
<div class="a ev" style="left:425px;top:882px">eval</div>
<div class="a mono m12" style="left:521px;top:885px">{"passage":"S</div>
<div class="a mono m12" style="left:521px;top:905px">taten Island</div>
<div class="a mono m12" style="left:521px;top:924px">ferry<span class="el">…</span></div>
<div class="dot" style="left:641px;top:886px;width:6px;height:6px;background:#71717a"></div>
<div class="a mono m12" style="left:653px;top:885px">0</div>
<div class="dot" style="left:641px;top:912px;width:6px;height:6px;background:#7c3aed"></div>
<div class="a mono m12" style="left:653px;top:911px">0.1111111<span class="el">…</span></div>
<div class="dot" style="left:641px;top:938px;width:6px;height:6px;background:#3b82f6"></div>
<div class="a mono m12" style="left:653px;top:937px">0</div>
<div class="a mono m12" style="left:761px;top:885px">0</div>
<div class="a" style="left:884px;top:887.5px;width:8px;height:1px;background:#3f3f46"></div>
<div class="a sv" style="left:1001.5px;top:881.1px;color:#3f3f46" id="s60">100.00%</div>
<div class="a sv" style="left:1201px;top:881.1px;color:#3f3f46">3.1s</div>
<div class="a sv" style="left:1001.5px;top:907.2px;color:#5b2bc0" id="s61">88.9%</div>
<div class="a bd" style="left:1050px;top:908px;width:46px;background:#dcfce7" id="bd61">+11.1%</div>
<div class="a sv" style="left:1201px;top:907.2px;color:#5b2bc0">2.1s</div>
<div class="a sv" style="left:1001.5px;top:933.3px;color:#3346c4" id="s62">100.0%</div>
<div class="a bd" style="left:1058.5px;top:934px;width:46px;background:#f4f4f5" id="bd62">0.0%</div>
<div class="a sv" style="left:1201px;top:933.3px;color:#3346c4">0.1s</div>
</div><!-- POPUP -->
<div id="popup">
<div class="pop" style="left:994.5px;top:423px;width:249.5px;height:243.5px"></div>
<div class="a" style="left:1007px;top:436px;font-size:13px;color:#3f3f46" id="p_l1">For <span style="display:inline-block;width:8px;height:8px;border-radius:50%;background:#71717a;margin:0 1px 0 1px"></span> Classifier, the avg value for</div>
<svg style="left:1205px;top:438px" width="9" height="9" viewBox="0 0 9 9"><path d="M8 1 L1 8" stroke="#a1a1aa" stroke-width="1" stroke-linecap="round"/><circle cx="2" cy="2" r="1.3" fill="none" stroke="#a1a1aa" stroke-width="1"/><circle cx="7" cy="7" r="1.3" fill="none" stroke="#a1a1aa" stroke-width="1"/></svg>
<div class="a" style="left:1007px;top:454px;font-size:13px;color:#3f3f46" id="p_l2">normalized_diff is 98.15%</div>
<div class="hl" style="left:995.5px;top:480px;width:247.5px"></div>
<div class="a" style="left:1007px;top:492px;font-size:13px;color:#71717a;letter-spacing:-0.15px" id="p_fu">Filter by unique</div>
<svg style="left:1009.5px;top:523px" width="7" height="7" viewBox="0 0 7 7"><path d="M0.8 6.2 L6 1 M1.6 1 H6 V5.4" fill="none" stroke="#15803d" stroke-width="1.1" stroke-linecap="round" stroke-linejoin="round"/></svg>
<div class="a" style="left:1027px;top:520px;font-size:13px;color:#15803d" id="p_imp">89 improvements</div>
<svg style="left:1009.5px;top:551px" width="7" height="7" viewBox="0 0 7 7"><path d="M0.8 0.8 L6 6 M6 1.6 V6 H1.6" fill="none" stroke="#be185d" stroke-width="1.1" stroke-linecap="round" stroke-linejoin="round"/></svg>
<div class="a" style="left:1027px;top:548px;font-size:13px;color:#be185d" id="p_reg">5 regressions</div>
<svg style="left:1008px;top:578.5px" width="10" height="8" viewBox="0 0 10 8"><path d="M0.6 1 H9.4 M2.3 4 H7.7 M4 7 H6" stroke="#52525b" stroke-width="1.1" stroke-linecap="round"/></svg>
<div class="a" style="left:1027px;top:576px;font-size:13px;color:#27272a" id="p_g1">270 in this group</div>
<svg style="left:1008px;top:606.5px" width="10" height="8" viewBox="0 0 10 8"><path d="M0.6 1 H9.4 M2.3 4 H7.7 M4 7 H6" stroke="#52525b" stroke-width="1.1" stroke-linecap="round"/></svg>
<div class="a" style="left:1027px;top:604px;font-size:13px;color:#27272a;letter-spacing:-0.1px" id="p_g2">270 total in any experiment</div>
<div class="hl" style="left:995.5px;top:629px;width:247.5px"></div>
<div class="a" style="left:999.5px;top:634px;width:239.5px;height:27.5px;border-radius:4px;background:#e4e4e7"></div>
<div class="a" style="left:1007px;top:641px;font-size:13px;color:#18181b;letter-spacing:-0.17px" id="p_agg">Aggregate</div>
<svg style="left:1222px;top:644px" width="6" height="8" viewBox="0 0 6 8"><path d="M1.5 1.2 L4.3 4 L1.5 6.8" fill="none" stroke="#71717a" stroke-width="1"/></svg>
</div>
<!-- SUBMENU -->
<div id="submenu">
<div class="pop" style="left:1239px;top:567px;width:202px;height:380px"></div>
<div class="dot" style="left:1252px;top:582.5px;width:6px;height:6px;background:#71717a"></div>
<div class="a" style="left:1264px;top:579px;font-size:13px;color:#52525b;letter-spacing:-0.15px" id="s_c">Classifier</div>
<svg style="left:1254.5px;top:610px" width="9" height="7.2" viewBox="0 0 10 8"><path d="M1 4.2 L3.6 6.8 L9 1.2" fill="none" stroke="#18181b" stroke-width="1.2" stroke-linecap="round" stroke-linejoin="round"/></svg>
<div class="a mi" style="left:1272px;top:607px" id="s_a1">Average</div>
<div class="a mi" style="left:1272px;top:635px">Minimum</div>
<div class="a mi" style="left:1272px;top:663px">Maximum</div>
<div class="dot" style="left:1252px;top:698.5px;width:6px;height:6px;background:#7c3aed"></div>
<div class="a" style="left:1264px;top:695px;font-size:13px;color:#52525b;letter-spacing:-0.1px" id="s_n1">Numeric rater with reasoning</div>
<div class="a mi" style="left:1272px;top:723px">Average</div>
<div class="a mi" style="left:1272px;top:751px">Minimum</div>
<div class="a mi" style="left:1272px;top:779px">Maximum</div>
<div class="dot" style="left:1252px;top:814.5px;width:6px;height:6px;background:#3b82f6"></div>
<div class="a" style="left:1264px;top:811px;font-size:13px;color:#52525b;letter-spacing:-0.1px" id="s_n2">Numeric rater</div>
<div class="a mi" style="left:1272px;top:839px">Average</div>
<div class="a mi" style="left:1272px;top:867px">Minimum</div>
<div class="a mi" style="left:1272px;top:895px">Maximum</div>
</div>
<!-- CURSOR -->
<svg style="left:1173px;top:646px" width="13" height="19" viewBox="0 0 13 19"><path d="M1 1 V15.4 L4.2 12.3 L6.6 17.8 L9.6 16.5 L7.2 11.2 H11.6 Z" fill="#000" stroke="#fff" stroke-width="1.1" stroke-linejoin="round"/></svg>
</body></html>
